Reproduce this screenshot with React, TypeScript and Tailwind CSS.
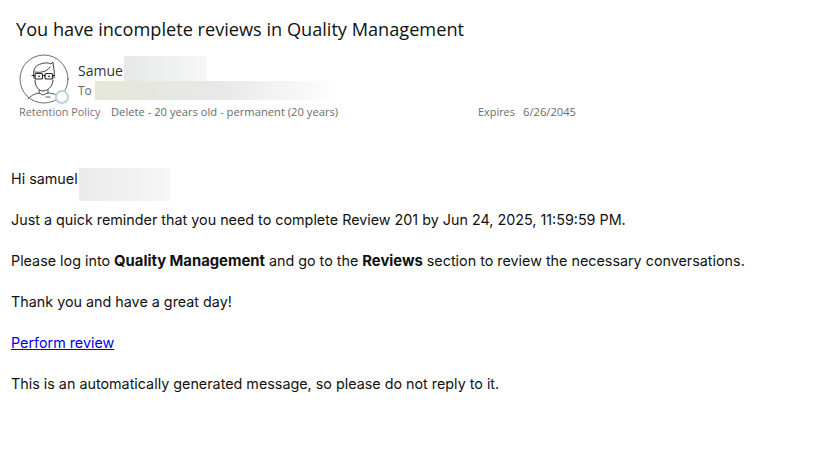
function Avatar() {
  return (
    <div className="relative h-[50px] w-[50px] shrink-0">
      <svg viewBox="0 0 50 50" className="h-[50px] w-[50px]" fill="none" stroke="#2b2b2b" strokeLinecap="round" strokeLinejoin="round">
        <circle cx="25" cy="25" r="24" strokeWidth="0.7" />
        <path d="M15 24c-1-6 0-11 4-13 4-2 10-3 13-1l2-2 .5 5c1 3 1 7 .5 11" strokeWidth="0.9" />
        <path d="M16 26c0 7 4 11 8 11s10-4 10-11" strokeWidth="0.9" />
        <path d="M16 18c5 1 12 0 15-5" strokeWidth="0.9" />
        <rect x="16" y="19.5" width="7.5" height="5.5" rx="1.3" strokeWidth="1.2" />
        <rect x="26" y="19.5" width="7.5" height="5.5" rx="1.3" strokeWidth="1.2" />
        <path d="M23.5 21.5h2.5M13 21.5h3M33.5 21.5h2" strokeWidth="1" />
        <circle cx="20" cy="22.3" r="0.9" fill="#2b2b2b" stroke="none" />
        <circle cx="30" cy="22.3" r="0.9" fill="#2b2b2b" stroke="none" />
        <path d="M20 36v3l4 2 5-2v-3M20 39c-5 1-9 3-11 6M29 39c5 0 9 2 10 3M27 43h4" strokeWidth="0.8" />
      </svg>
      <span className="absolute left-[36px] top-[36px] h-[14px] w-[14px] rounded-full border-2 border-[#b9d2e2] bg-white" />
    </div>
  );
}

function Para({ children }: { children: React.ReactNode }) {
  return <p className="h-[41px] leading-[20px]">{children}</p>;
}

export default function App() {
  return (
    <div className="h-[458px] w-[826px] overflow-hidden bg-white text-black">
      {/* Header */}
      <div className="px-[16px] pt-[17px] font-['Open_Sans',sans-serif]">
        <h1 className="text-[18.16px] leading-[25px] text-[#111]">You have incomplete reviews in Quality Management</h1>
        <div className="mt-[12px] flex items-start pl-[3px]">
          <Avatar />
          <div className="ml-[9px] mt-[2px] w-[300px]">
            <div className="flex h-[25px] items-start text-[14px] text-[#333]">
              <span className="mt-[5px] leading-[20px]">Samue</span>
              <span className="ml-[1px] h-[25px] w-[83px] bg-gradient-to-r from-[#e6e8e8] to-[#f7f7f7]" />
            </div>
            <div className="flex h-[19px] items-center text-[12px] text-[#666]">
              To
              <span className="ml-[3px] h-[19px] w-[245px] bg-gradient-to-r from-[#e4e7d8] via-[#e8e8e8] to-white" />
            </div>
          </div>
        </div>
        <div className="-mt-[3px] flex h-[23px] items-center text-[11.2px] text-[#6b6b6b]">
          <span className="ml-[3px] w-[92px] text-[10.9px] text-[#7b6f7b]">Retention Policy</span>
          <span className="w-[367px]">Delete - 20 years old - permanent (20 years)</span>
          <span className="w-[45px] text-[10.9px]">Expires</span>
          <span>6/26/2045</span>
        </div>
      </div>

      {/* Body */}
      <div className="px-[11px] pt-[45px] font-['Inter',sans-serif] text-[14.34px] text-[#111]">
        <Para>
          <span className="flex h-[20px] items-center">
            Hi samuel
            <span className="ml-[1px] mt-[11px] h-[33px] w-[91px] shrink-0 bg-gradient-to-r from-[#ebebeb] to-[#f6f6f6]" />
          </span>
        </Para>
        <Para>Just a quick reminder that you need to complete Review 201 by Jun 24, 2025, 11:59:59 PM.</Para>
        <Para>
          Please log into <b className="text-[14.8px]">Quality Management</b> and go to the <b className="text-[14.8px]">Reviews</b> section to review the necessary conversations.
        </Para>
        <Para>Thank you and have a great day!</Para>
        <Para>
          <a href="#" className="text-[#0000ee] underline">Perform review</a>
        </Para>
        <Para>This is an automatically generated message, so please do not reply to it.</Para>
      </div>
    </div>
  );
}
